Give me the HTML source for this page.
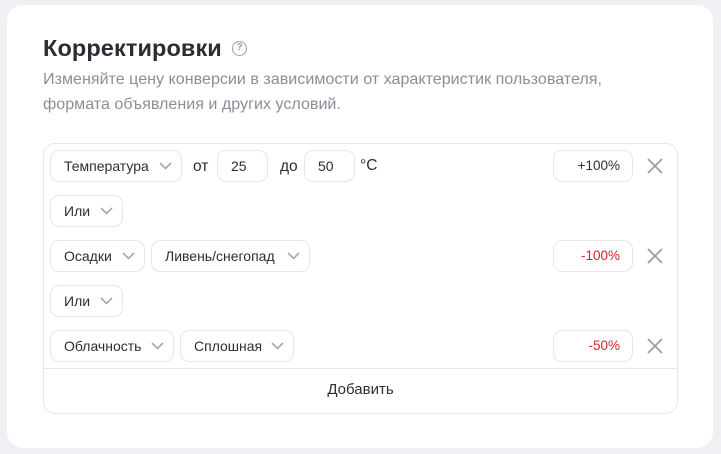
<!DOCTYPE html>
<html><head><meta charset="utf-8"><style>
*{box-sizing:border-box;margin:0;padding:0}
body{width:721px;height:454px;background:#eef0f4;font-family:"Liberation Sans","DejaVu Sans",sans-serif;position:relative;overflow:hidden}
.card{position:absolute;left:7px;top:5px;width:706px;height:443px;background:#fff;border-radius:16px}
h1{position:absolute;left:43px;top:35px;font-size:23.5px;font-weight:bold;color:#2a2d33;letter-spacing:0.1px}
.q{position:absolute;left:232px;top:41px;width:15px;height:15px;border:1.6px solid #9a9ea8;border-radius:50%;font-size:10px;color:#9a9ea8;text-align:center;line-height:12px;font-weight:bold}
.sub{position:absolute;left:43px;top:67px;font-size:16.1px;line-height:25px;color:#8a8e98;width:620px}
.box{position:absolute;left:43px;top:143px;width:635px;height:271px;border:1px solid #e6e7ea;border-radius:12px}
.sep{position:absolute;left:44px;top:368px;width:633px;height:1px;background:#e6e7ea}
.b{position:absolute;height:32px;border:1px solid #e6e7ea;border-radius:9px;font-size:14px;color:#2b2e35;line-height:30px;padding-left:13px}
.b svg{position:absolute;right:9px;top:11px}
.t{position:absolute;font-size:15.5px;color:#2b2e35}
.p{text-align:right;padding-right:12px;padding-left:0;font-size:13.5px}
.red{color:#d0262a}
.x{position:absolute;width:18px;height:18px}
</style></head><body>
<div class="card"></div>
<h1>Корректировки</h1>
<div class="q">?</div>
<div class="sub">Изменяйте цену конверсии в зависимости от характеристик пользователя, формата объявления и других условий.</div>
<div class="box"></div>
<div class="sep"></div>

<div class="b" style="left:50px;top:150px;width:132px">Температура<svg width="13" height="8"><path d="M1 1l5.5 5.5L12 1" stroke="#a3a7b0" stroke-width="1.6" fill="none"/></svg></div>
<div class="t" style="left:193px;top:158px">от</div>
<div class="b" style="left:217px;top:150px;width:51px;padding-left:13px">25</div>
<div class="t" style="left:280px;top:158px">до</div>
<div class="b" style="left:304px;top:150px;width:51px;padding-left:13px">50</div>
<div class="t" style="left:360px;top:157px">°C</div>
<div class="b p" style="left:553px;top:150px;width:80px">+100%</div>

<div class="b" style="left:50px;top:195px;width:73px">Или<svg width="13" height="8"><path d="M1 1l5.5 5.5L12 1" stroke="#a3a7b0" stroke-width="1.6" fill="none"/></svg></div>

<div class="b" style="left:50px;top:240px;width:95px">Осадки<svg width="13" height="8"><path d="M1 1l5.5 5.5L12 1" stroke="#a3a7b0" stroke-width="1.6" fill="none"/></svg></div>
<div class="b" style="left:151px;top:240px;width:159px">Ливень/снегопад<svg width="13" height="8"><path d="M1 1l5.5 5.5L12 1" stroke="#a3a7b0" stroke-width="1.6" fill="none"/></svg></div>
<div class="b p red" style="left:553px;top:240px;width:80px">-100%</div>

<div class="b" style="left:50px;top:285px;width:73px">Или<svg width="13" height="8"><path d="M1 1l5.5 5.5L12 1" stroke="#a3a7b0" stroke-width="1.6" fill="none"/></svg></div>

<div class="b" style="left:50px;top:330px;width:124px">Облачность<svg width="13" height="8"><path d="M1 1l5.5 5.5L12 1" stroke="#a3a7b0" stroke-width="1.6" fill="none"/></svg></div>
<div class="b" style="left:180px;top:330px;width:114px">Сплошная<svg width="13" height="8"><path d="M1 1l5.5 5.5L12 1" stroke="#a3a7b0" stroke-width="1.6" fill="none"/></svg></div>
<div class="b p red" style="left:553px;top:330px;width:80px">-50%</div>

<svg class="x" style="left:646px;top:157px" viewBox="0 0 18 18"><path d="M2 2l14 14M16 2L2 16" stroke="#9a9ea8" stroke-width="1.8"/></svg>
<svg class="x" style="left:646px;top:247px" viewBox="0 0 18 18"><path d="M2 2l14 14M16 2L2 16" stroke="#9a9ea8" stroke-width="1.8"/></svg>
<svg class="x" style="left:646px;top:337px" viewBox="0 0 18 18"><path d="M2 2l14 14M16 2L2 16" stroke="#9a9ea8" stroke-width="1.8"/></svg>

<div class="t" style="left:44px;width:633px;top:381px;text-align:center;font-size:15px">Добавить</div>
</body></html>
